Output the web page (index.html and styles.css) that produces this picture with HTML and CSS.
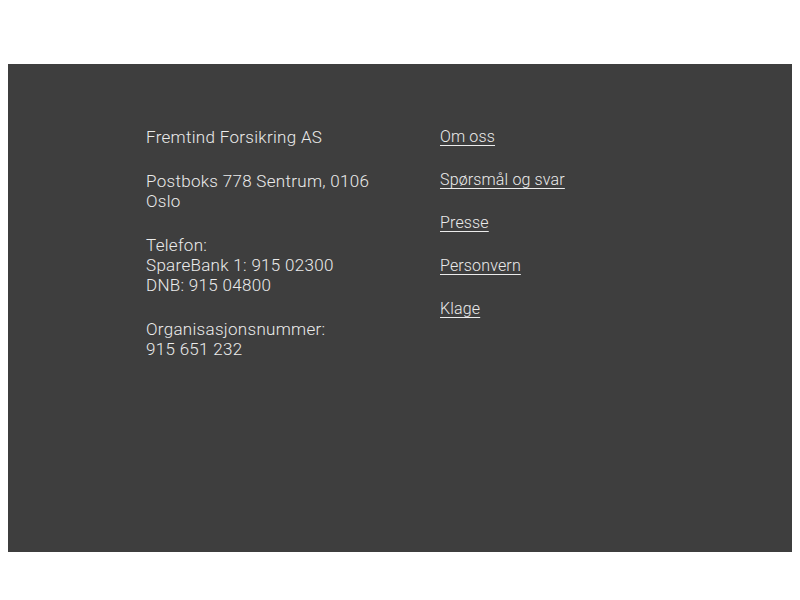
FILE: index.html
```html
<!DOCTYPE html>
<html lang="no">
<head>
<meta charset="utf-8" />
<title>Fremtind Forsikring</title>
<link rel="stylesheet" href="styles.css">
</head>
<body>
<div class="top"></div>
<footer class="footer">
	<div class="footer_cols">
		<div class="footer_info">
			<p>Fremtind Forsikring AS</p>
			<p>Postboks 778 Sentrum, 0106 Oslo</p>
			<p>Telefon:<br />SpareBank 1: 915 02300<br />DNB: 915 04800</p>
			<p>Organisasjonsnummer:<br />915 651 232</p>
		</div>
		<ul class="footer_links">
			<li><a href="javascript:;">Om oss</a></li>
			<li><a href="javascript:;">Spørsmål og svar</a></li>
			<li><a href="javascript:;">Presse</a></li>
			<li><a href="javascript:;">Personvern</a></li>
			<li><a href="javascript:;">Klage</a></li>
		</ul>
	</div>
</footer>
</body>
</html>
```

FILE: styles.css
```css
body { margin: 8px; background: #fff; font-family: Roboto, "Liberation Sans", Arial, sans-serif; }
ul { padding: 0; margin: 0; } li { list-style: none; }

.top { height: 56px; }

.footer { background: #3e3e3e; color: #ebebeb; min-height: 488px; box-sizing: border-box; padding: 63px 138px 0; }
.footer_cols { display: flex; gap: 44px; }
.footer_info { width: 250px; flex: none; font-size: 17px; line-height: 20px; font-weight: 300; letter-spacing: 0.3px; }
.footer_info p { margin: 0 0 24px; }
.footer_info p:last-child { margin-bottom: 0; }

.footer_links { font-size: 16px; line-height: 19px; font-weight: 300; letter-spacing: 0.15px; }
.footer_links li { margin-bottom: 24px; }
.footer_links a { color: #ebebeb; text-decoration: underline; text-underline-offset: 3px; text-decoration-thickness: 1px; }
```
